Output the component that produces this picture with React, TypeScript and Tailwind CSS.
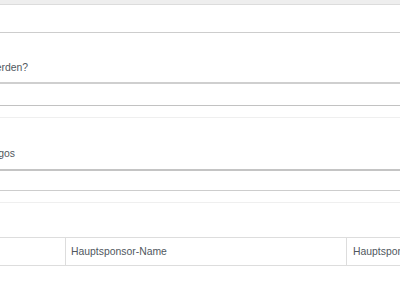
const labelFont = { fontFamily: '"Liberation Sans", Arial, sans-serif' };

function ClippedLabel({ text, right }: { text: string; right: string }) {
  // the page is scrolled sideways: only the tail of each label is visible
  return (
    <div className="h-[12px] overflow-hidden">
      <div
        className={`-ml-[400px] ${right} whitespace-nowrap text-right text-[10.4px] leading-[12px] text-[#50575e]`}
      >
        {text}
      </div>
    </div>
  );
}

export default function App() {
  return (
    <div className="h-[300px] w-[400px] overflow-hidden bg-white" style={labelFont}>
      {/* top bar */}
      <div className="h-[5px] border-b border-[#dcdcdc] bg-[#eeeeee]" />
      <div className="h-[27px]" />

      {/* Feld 1 */}
      <div className="border-t border-[#cdcdcd] pt-[29px]">
        <ClippedLabel text="Soll ein Hauptsponsor angezeigt werden?" right="w-[428px]" />
        <div className="mt-[8px] h-[24px] border-t-2 border-b border-t-[#cfcfcf] border-b-[#c2c2c2] bg-white" />
        <div className="h-[11px]" />
      </div>

      {/* Feld 2 */}
      <div className="border-t border-[#efefef] pt-[30px]">
        <ClippedLabel text="Hauptsponsor-Logos" right="w-[415px]" />
        <div className="mt-[9px] h-[22px] border-t-2 border-b border-t-[#c4c4c4] border-b-[#cdcdcd] bg-white" />
        <div className="h-[11px]" />
      </div>

      <div className="h-[35px] border-t border-[#efefef]" />

      {/* Tabellenkopf */}
      <div className="flex h-[29px] border-y border-[#dddddd] text-[10.4px] text-[#50575e]">
        <div className="w-[66px] shrink-0 border-r border-[#dddddd]" />
        <div className="flex w-[281px] shrink-0 items-center border-r border-[#dddddd] pl-[5px]">
          Hauptsponsor-Name
        </div>
        <div className="flex shrink-0 items-center whitespace-nowrap pl-[6px]">
          Hauptsponsor-Link
        </div>
      </div>
    </div>
  );
}
